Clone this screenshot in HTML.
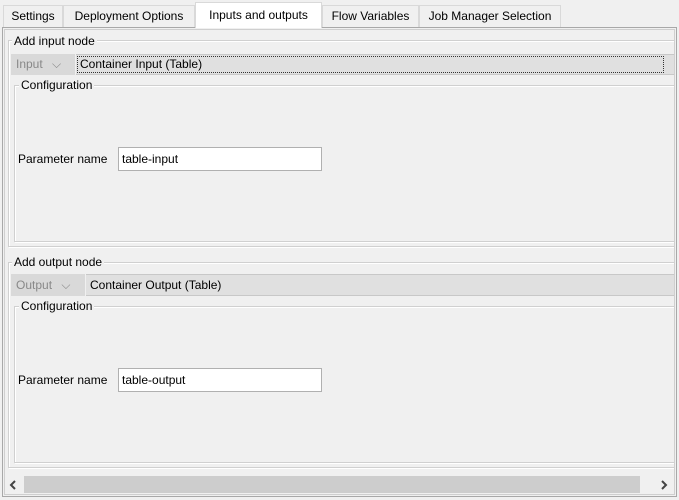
<!DOCTYPE html>
<html><head><style>
body{margin:0;width:679px;height:500px;background:#f0f0f0;font-family:"Liberation Sans",sans-serif;font-size:12px;color:#000;position:relative;overflow:hidden}
.a{position:absolute;box-sizing:border-box}
.tab{position:absolute;top:5px;height:22px;border:1px solid #d9d9d9;border-bottom:none;background:#f0f0f0;line-height:21px;text-align:center;box-sizing:border-box}
.lbl{position:absolute;background:#f0f0f0;padding:0 2px;line-height:14px}
.grp{position:absolute;border:1px solid #d0d0d0;box-shadow:inset 1px 1px 0 #fff,1px 1px 0 #fff;box-sizing:border-box}
#clip{position:absolute;left:0;top:0;width:675px;height:500px;overflow:hidden}
</style></head><body>
<div id="clip">
<div class="a" style="left:8px;top:40px;width:700px;height:207px;border:1px solid #d0d0d0;box-shadow:inset 1px 1px 0 #fff,1px 1px 0 #fff"></div>
<div class="lbl" style="left:12px;top:34px">Add input node</div>
<div class="a" style="left:11px;top:54px;width:64px;height:21px;background:#d9d9d9;color:#888;line-height:21px;padding-left:5px">Input <span style="margin-left:6px">⌵</span></div>
<div class="a" style="left:76px;top:54px;width:620px;height:21px;background:#e0e0e0;border-top:1px solid #c8c8c8;border-bottom:1px solid #c8c8c8"></div>
<div class="a" style="left:77px;top:56px;width:587px;height:17px;border:1px dotted #333;line-height:15px;padding-left:2px">Container Input (Table)</div>
<div class="grp" style="left:14px;top:85px;width:700px;height:157px"></div>
<div class="lbl" style="left:19px;top:78px">Configuration</div>
<div class="a" style="left:18px;top:152px;line-height:14px">Parameter name</div>
<div class="a" style="left:118px;top:147px;width:204px;height:24px;background:#fff;border:1px solid #b0b0b0;line-height:22px;padding-left:3px">table-input</div>

<div class="grp" style="left:8px;top:262px;width:700px;height:206px"></div>
<div class="lbl" style="left:12px;top:255px">Add output node</div>
<div class="a" style="left:11px;top:274px;width:74px;height:22px;background:#d9d9d9;color:#888;line-height:22px;padding-left:5px">Output <span style="margin-left:6px">⌵</span></div>
<div class="a" style="left:86px;top:274px;width:610px;height:22px;background:#e0e0e0;border-top:1px solid #c8c8c8;border-bottom:1px solid #c8c8c8;line-height:20px;padding-left:4px">Container Output (Table)</div>
<div class="grp" style="left:14px;top:306px;width:700px;height:157px"></div>
<div class="lbl" style="left:19px;top:299px">Configuration</div>
<div class="a" style="left:18px;top:373px;line-height:14px">Parameter name</div>
<div class="a" style="left:118px;top:368px;width:204px;height:24px;background:#fff;border:1px solid #b0b0b0;line-height:22px;padding-left:3px">table-output</div>

<div class="a" style="left:5px;top:473px;width:669px;height:21px;background:#f0f0f0"></div>
<div class="a" style="left:24px;top:476px;width:616px;height:17px;background:#cdcdcd"></div>
</div>
<div class="a" style="left:2px;top:27px;width:675px;height:470px;border:1px solid #a8a8a8;"></div>
<div class="a" style="left:4px;top:29px;width:671px;height:466px;border:1px solid #cfcfcf;"></div>
<div class="tab" style="left:3px;width:60px">Settings</div>
<div class="tab" style="left:63px;width:132px">Deployment Options</div>
<div class="tab" style="left:195px;top:2px;height:26px;width:127px;background:#fff;line-height:25px;border-color:#d9d9d9">Inputs and outputs</div>
<div class="tab" style="left:322px;width:97px">Flow Variables</div>
<div class="tab" style="left:419px;width:142px">Job Manager Selection</div>
<svg class="a" style="left:8px;top:478px" width="12" height="14"><path d="M7 3 L3 7 L7 11" stroke="#444" stroke-width="2" fill="none"/></svg>
<svg class="a" style="left:658px;top:478px" width="12" height="14"><path d="M4 3 L8 7 L4 11" stroke="#444" stroke-width="2" fill="none"/></svg>
</body></html>
